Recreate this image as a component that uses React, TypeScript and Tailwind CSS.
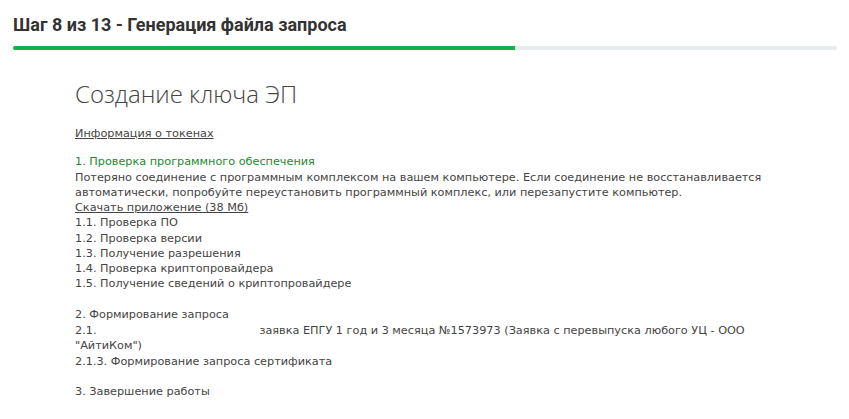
import React from "react";

export default function App() {
  const body = "font-['DejaVu_Sans',sans-serif] text-[11.25px] leading-[15.25px] text-[#444]";
  return (
    <div className="w-[849px] h-[419px] bg-white overflow-hidden">
      <div className="px-[13px] pt-[14px] w-[837px] box-content">
        <h1 className="font-['Roboto',sans-serif] font-bold text-[18px] leading-[22px] text-[#333]">
          Шаг 8 из 13 - Генерация файла запроса
        </h1>
        <div className="mt-[10px] h-[4px] w-[824px] rounded-[2px] bg-[#e7ebee] overflow-hidden">
          <div className="h-full w-[502px] bg-[#13b24b]" />
        </div>
      </div>
      <div className="ml-[75px] w-[715px]">
        <h2 className="mt-[29px] font-['Open_Sans',sans-serif] font-light text-[24px] leading-[30px] text-[#444]">
          Создание ключа ЭП
        </h2>
        <div className={body}>
          <div className="mt-[17px]">
            <span className="underline">Информация о токенах</span>
          </div>
          <div className="mt-[13px] text-[#1a8a2e]">1. Проверка программного обеспечения</div>
          <div>
            Потеряно соединение с программным комплексом на вашем компьютере. Если соединение не восстанавливается
            автоматически, попробуйте переустановить программный комплекс, или перезапустите компьютер.
          </div>
          <div>
            <span className="underline">Скачать приложение (38 Мб)</span>
          </div>
          <div>1.1. Проверка ПО</div>
          <div>1.2. Проверка версии</div>
          <div>1.3. Получение разрешения</div>
          <div>1.4. Проверка криптопровайдера</div>
          <div>1.5. Получение сведений о криптопровайдере</div>
          <div className="mt-[15.25px]">2. Формирование запроса</div>
          <div className="mt-[1px]">
            2.1.<span className="inline-block h-px w-[163px]"></span>заявка ЕПГУ 1 год и 3 месяца №1573973 (Заявка с перевыпуска любого УЦ - ООО "АйтиКом")
          </div>
          <div>2.1.3. Формирование запроса сертификата</div>
          <div className="mt-[15.25px]">3. Завершение работы</div>
        </div>
      </div>
    </div>
  );
}
